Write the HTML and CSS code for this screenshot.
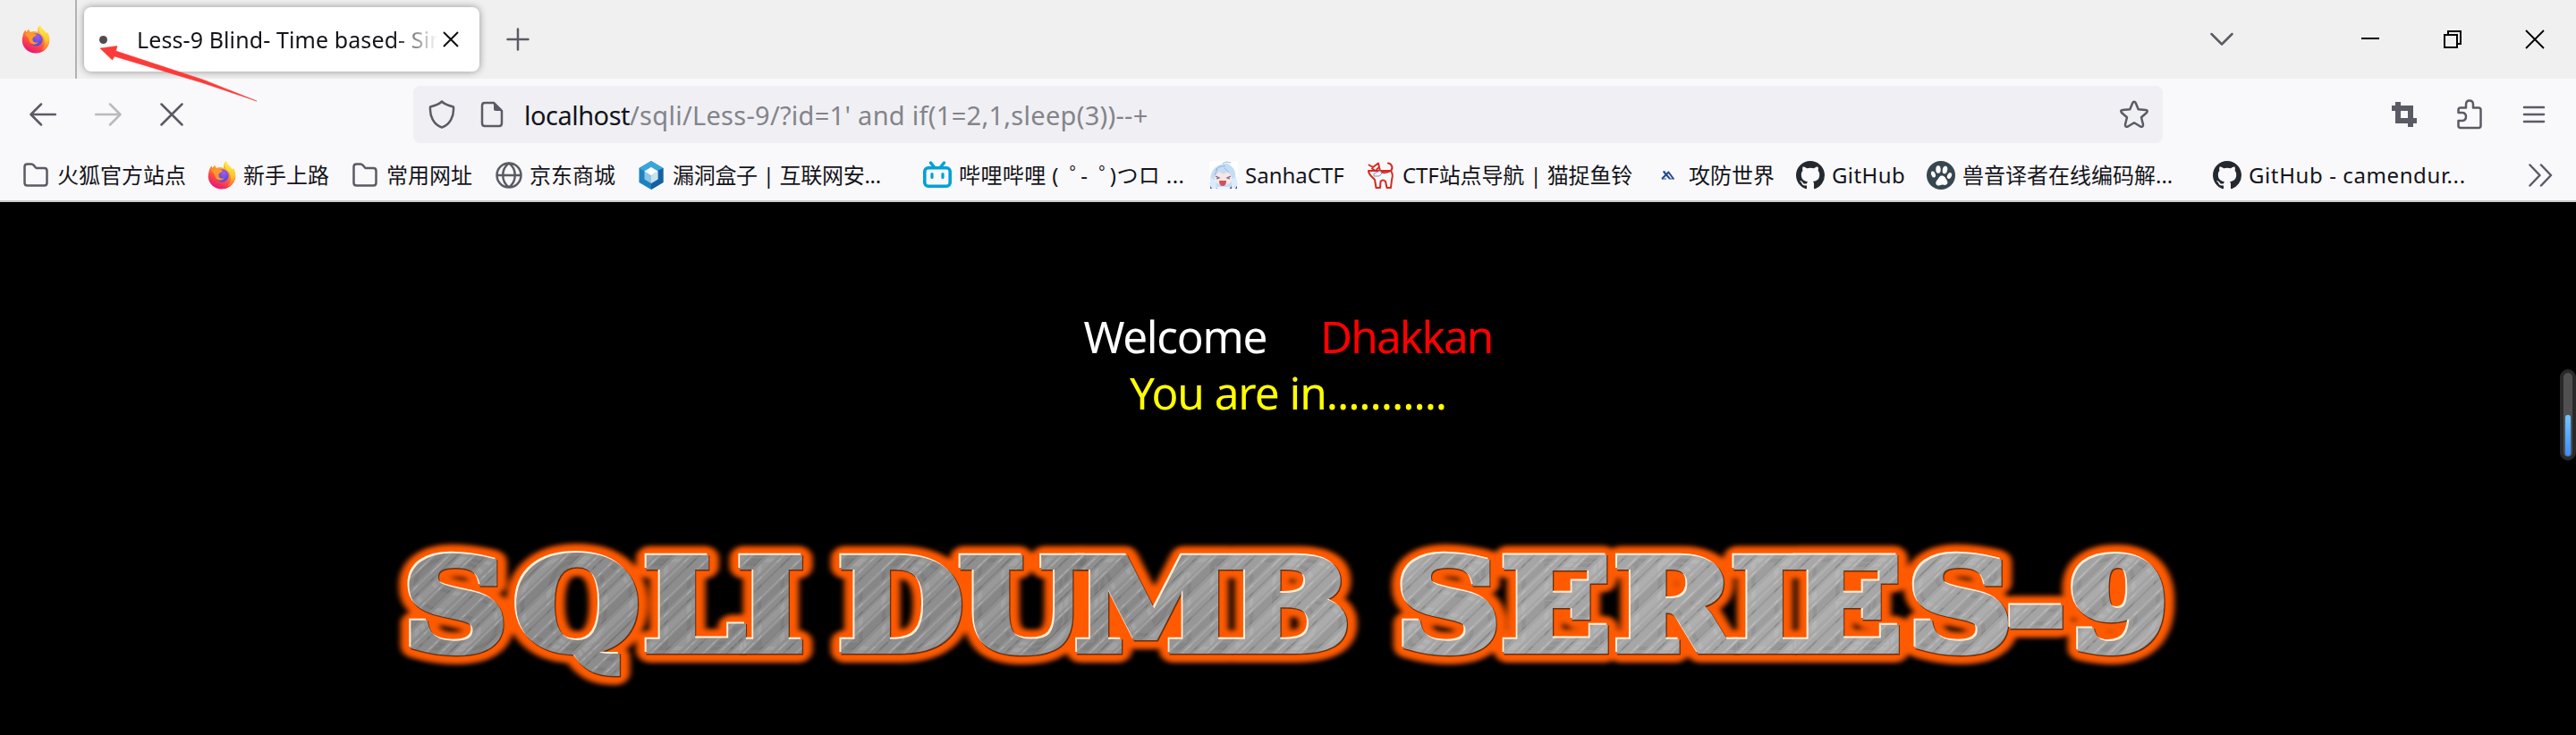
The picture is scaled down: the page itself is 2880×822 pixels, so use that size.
FILE: index.html
```html
<!DOCTYPE html>
<html lang="zh-CN">
<head>
<meta charset="utf-8">
<title>Less-9 Blind- Time based- Single Quotes</title>
<link rel="stylesheet" href="styles.css">
</head>
<body>
<svg class="defs" width="0" height="0" aria-hidden="true">
  <defs>
    <linearGradient id="fox" x1=".8" y1="0" x2=".3" y2="1"><stop offset="0" stop-color="#fff44f"/><stop offset=".35" stop-color="#ffa72c"/><stop offset=".65" stop-color="#ff4f3f"/><stop offset="1" stop-color="#e6107c"/></linearGradient>
    <linearGradient id="foxtail" x1="0" y1="0" x2="0" y2="1"><stop offset="0" stop-color="#fff04e"/><stop offset=".6" stop-color="#ffc52f"/><stop offset="1" stop-color="#ff6b37"/></linearGradient>
    <radialGradient id="globe" cx=".6" cy=".3"><stop offset="0" stop-color="#a45ae8"/><stop offset="1" stop-color="#5f4bd8"/></radialGradient>
    <symbol id="firefox" viewBox="0 0 32 32">
      <path fill="url(#fox)" d="M1.500 12C2 9 3 7 4.500 5.500L5.500 8 8 4.500 10 8C13 6.500 16 7 18 8C17.500 4 19 1.500 21 0C21.500 4 26 6 28 10L29 8C31 12 31.800 16 31 20C29 27 23 31.500 16 31.500C8 31.500 1.500 26 .8 18C.7 16 1 14 1.500 12Z"/>
      <path fill="url(#foxtail)" d="M21 0C21.500 4 26 6 28 10L29 8C31.500 13 31.500 18 30 22C28 27 25 28 22 28C27 24 27 17 24 12C21 10 18 6 21 0Z"/>
      <circle cx="16.500" cy="16.500" r="7.200" fill="url(#globe)"/>
      <path fill="#ff9a2c" d="M4 10C7 8 10 8 12 9.500L17 10.500C17 12 14 13 13 14C11 18 15 21 19 19C15 24 8 21 8 15C7 13 5 12 4 10Z"/>
    </symbol>
    <symbol id="folder" viewBox="0 0 32 32"><path class="line" d="M3.500 24.500V6.500Q3.500 3.500 6.500 3.500H11Q12.500 3.500 13.500 4.600L16.500 8H25.500Q28.500 8 28.500 11V24.500Q28.500 27.500 25.500 27.500H6.500Q3.500 27.500 3.500 24.500Z"/></symbol>
    <symbol id="github" viewBox="0 0 16 16"><path fill="#24292f" d="M8 0C3.580 0 0 3.580 0 8c0 3.540 2.290 6.530 5.470 7.590.4.070.55-.17.55-.38 0-.19-.01-.82-.01-1.490-2.010.37-2.530-.49-2.690-.94-.09-.23-.48-.94-.82-1.130-.28-.15-.68-.52-.01-.53.63-.01 1.080.58 1.230.82.72 1.210 1.870.87 2.330.66.070-.52.28-.87.51-1.070-1.780-.2-3.640-.89-3.640-3.950 0-.87.31-1.590.82-2.150-.08-.2-.36-1.020.08-2.120 0 0 .67-.21 2.200.82.64-.18 1.320-.27 2-.27s1.360.09 2 .27c1.530-1.040 2.200-.82 2.200-.82.44 1.100.16 1.920.08 2.120.51.56.82 1.270.82 2.150 0 3.070-1.870 3.750-3.650 3.950.29.25.54.73.54 1.480 0 1.070-.01 1.930-.01 2.200 0 .21.15.46.55.38A8.010 8.010 0 0 0 16 8c0-4.420-3.580-8-8-8Z"/></symbol>
  </defs>
</svg>

<header class="chrome">
  <div class="tabstrip">
    <div class="pinned"><svg width="32" height="32"><use href="#firefox"/></svg></div>
    <div class="tab">
      <i class="dot"></i>
      <span class="tab-title">Less-9 Blind- Time based- Sin</span>
      <svg class="tab-close" width="18" height="18" viewBox="0 0 18 18"><path d="M1 1L17 17M17 1L1 17" fill="none" stroke="#111" stroke-width="2"/></svg>
    </div>
    <svg class="plus" width="26" height="26" viewBox="0 0 26 26"><path class="line" d="M13 1.500V24.500M1.500 13H24.500"/></svg>
    <div class="window-tools">
      <svg width="26" height="16" viewBox="0 0 26 16"><path class="line" d="M1.500 2L13 13.500 24.500 2"/></svg>
      <svg width="20" height="22" viewBox="0 0 20 22"><path d="M0 10H20" stroke="#000" stroke-width="2"/></svg>
      <svg width="20" height="20" viewBox="0 0 20 20"><path d="M1 5H15V19H1ZM5 5V1H19V15H15" fill="none" stroke="#000" stroke-width="2"/></svg>
      <svg width="22" height="22" viewBox="0 0 22 22"><path d="M1 1L21 21M21 1L1 21" stroke="#000" stroke-width="1.800"/></svg>
    </div>
  </div>

  <div class="navbar">
    <div class="nav-buttons">
      <svg width="30" height="26" viewBox="0 0 30 26"><path class="line" d="M29 13H2M13 1.500L1.500 13 13 24.500"/></svg>
      <svg class="faded" width="30" height="26" viewBox="0 0 30 26"><path class="line" d="M1 13H28M17 1.500L28.500 13 17 24.500"/></svg>
      <svg width="26" height="26" viewBox="0 0 26 26"><path class="line" d="M1.500 1.500L24.500 24.500M24.500 1.500L1.500 24.500"/></svg>
    </div>
    <div class="urlbar">
      <svg width="30" height="32" viewBox="0 0 30 32"><path class="line" d="M15 1.500C18 4.500 23 6.300 28 7.500C28.800 18 24 27.500 15 30.500C6 27.500 1.200 18 2 7.500C7 6.300 12 4.500 15 1.500Z"/></svg>
      <svg class="page-icon" width="26" height="30" viewBox="0 0 26 30"><path class="line" d="M5 2H15L24 11V25Q24 28 21 28H5Q2 28 2 25V5Q2 2 5 2Z"/><path fill="#5b5b66" d="M15 1L25 11H17Q15 11 15 9Z"/></svg>
      <span class="url"><b>localhost</b>/sqli/Less-9/?id=1' and if(1=2,1,sleep(3))--+</span>
      <svg class="star" width="34" height="32" viewBox="0 0 34 32"><path class="line" d="M15.200 3.200Q17 .4 18.800 3.200L21.700 10.300 29.800 11Q33 11.500 31 14L25 19.300 27 27.300Q27.300 30.800 24 29.500L17 25.200 10 29.500Q6.700 30.800 7 27.300L9 19.300 3 14Q1 11.500 4.200 11L12.300 10.300Z"/></svg>
    </div>
    <div class="nav-tools">
      <svg width="30" height="30" viewBox="0 0 30 30"><path fill="#5b5b66" d="M5 1H11V5H25V19H29V25H25V29H19V25H5V11H1V5H5ZM11 11V19H19V11Z" fill-rule="evenodd"/></svg>
      <svg width="28" height="34" viewBox="0 0 28 34"><path class="line" d="M1.500 14V12Q1.500 9.500 4 9.500H10V6Q10 1.500 14 1.500T18 6V9.500H24Q26.500 9.500 26.500 12V29.500Q26.500 32 24 32H4Q1.500 32 1.500 29.500V24H6Q10 23.500 10 19.500T6 15H1.500Z"/></svg>
      <svg width="26" height="22" viewBox="0 0 26 22"><path class="line" d="M2 3H24M2 11H24M2 19H24"/></svg>
    </div>
  </div>

  <nav class="bookmarks">
    <div class="bm"><svg width="32" height="32"><use href="#folder"/></svg><span>火狐官方站点</span></div>
    <div class="bm"><svg width="32" height="32"><use href="#firefox"/></svg><span>新手上路</span></div>
    <div class="bm"><svg width="32" height="32"><use href="#folder"/></svg><span>常用网址</span></div>
    <div class="bm"><svg width="32" height="32" viewBox="0 0 32 32"><path class="line" d="M17 2.500A13.500 13.500 0 1 0 17 29.500A13.500 13.500 0 1 0 17 2.500ZM3.500 16H30.500M17 2.500C8 9 8 23 17 29.500C26 23 26 9 17 2.500"/></svg><span>京东商城</span></div>
    <div class="bm"><svg width="32" height="32" viewBox="0 0 32 32"><path fill="#1f82c0" d="M16 0L29.500 8V24L16 32 2.500 24V8Z"/><path fill="#3aa5db" d="M16 0L29.500 8 16 16 2.500 8Z"/><path fill="#1560a3" d="M29.500 8V24L16 32V25L23 20V11Z"/><path fill="#8cc7e6" d="M16 7L23.500 11.500V20.500L16 25 8.500 20.500V11.500Z"/><path fill="#fff" d="M16 7L23.500 11.500 16 16 8.500 11.500Z"/><path fill="#c5e2f1" d="M16 16L23.500 11.500V20.500L16 25Z"/></svg><span class="loud">漏洞盒子 | 互联网安...</span></div>
    <div class="bm"><svg width="32" height="32" viewBox="0 0 32 32"><path d="M8.500 2L12.500 7M23.500 2L19.500 7" stroke="#00a1d6" stroke-width="3.500" stroke-linecap="round"/><rect x="1.800" y="7.800" width="28.400" height="20.400" rx="4" fill="#f9f9fb" stroke="#00a1d6" stroke-width="3.600"/><path d="M10 14.500V18.500M22 14.500V18.500" stroke="#00a1d6" stroke-width="3.200" stroke-linecap="round"/></svg><span class="bili">哔哩哔哩 (<i>゜</i>-<i>゜</i>)つロ ...</span></div>
    <div class="bm"><svg width="32" height="32" viewBox="0 0 32 32"><path fill="#fff" d="M0 0H32V32H0Z"/><path d="M1 31L2 23 8 18 25 18 31 22 31 31Z" fill="#4b4385"/><path fill="#c5dcf5" d="M13 4C20 1 24 4 23 5C29 8 30 15 29 22L26 25 24 30H7L2 26C0 17 2 8 13 4Z"/><path fill="#dcebfb" d="M2 19L7 22 8 31H3L0 26ZM25 20L30 18 32 26 29 31H25Z"/><path fill="#fbe7e2" d="M6 17L11 12 16 15 21 12 25 17V23Q16 31 6 23Z"/><path d="M7 17L11 19 8 20M24 17L20 19 23 20" fill="none" stroke="#6f678f" stroke-width="1.300"/><path d="M11 22H19Q19 28 15 28T11 22Z" fill="#c95263"/><path fill="#eef3fd" d="M9 29H22L24 32H8Z"/><path d="M15 3Q18 0 24 2M7 10Q11 5 18 6M6 16L9 9M17 8L22 13" fill="none" stroke="#8fb5df"/></svg><span>SanhaCTF</span></div>
    <div class="bm"><svg width="32" height="32" viewBox="0 0 32 32"><path d="M2.500 4.500L7 7 13 2.500 15 11.500C18 14 23 13.500 27 11C30 8 28 3 24 2.500M27 11C30 15 29 18 28 21L27 30H22.500L21 23Q18 20 15.500 23L15 30H10.500L9 21C6 17 2 16 2 11ZM6 8.500L9 10.500M10.500 10.500L12.500 8" fill="none" stroke="#d42a20" stroke-width="2" stroke-linecap="round" stroke-linejoin="round"/><path d="M8 14L15 11 17 14 14 17 8 17Z" fill="#eef1fb" stroke="#8792b5"/></svg><span class="cat">CTF站点导航 | 猫捉鱼铃</span></div>
    <div class="bm"><svg width="32" height="32" viewBox="0 0 32 32"><path d="M12 12L19 20M18 12L10 20M17 12L23 20" stroke="#254a8b" stroke-width="2"/><path d="M10 20H15M11 12H14M19 20H24" stroke="#254a8b"/></svg><span>攻防世界</span></div>
    <div class="bm"><svg width="32" height="32"><use href="#github"/></svg><span class="gh">GitHub</span></div>
    <div class="bm"><svg width="32" height="32" viewBox="0 0 32 32"><circle cx="16" cy="16" r="16" fill="#37474f"/><g fill="#fff"><ellipse cx="13" cy="9.500" rx="2.700" ry="4.300"/><ellipse cx="20.500" cy="10" rx="2.700" ry="4.300" transform="rotate(12 20.500 10)"/><ellipse cx="7.500" cy="15" rx="2.300" ry="3.600" transform="rotate(-20 7.500 15)"/><ellipse cx="25.500" cy="16.500" rx="2.300" ry="3.600" transform="rotate(25 25.500 16.500)"/><path d="M17 16.500C20 16.500 21 19 22.500 21.500C25 25 22 28 18 26.500C15 26.500 14 28.500 11.500 27C9 25 11 22 12.500 20.500C14 18.500 14.500 16.500 17 16.500Z"/></g></svg><span>兽音译者在线编码解...</span></div>
    <div class="bm"><svg width="32" height="32"><use href="#github"/></svg><span class="camen">GitHub - camendur...</span></div>
    <svg class="more" width="28" height="26" viewBox="0 0 28 26"><path class="line" d="M2.500 1.500L13.500 13 2.500 24.500M15 1.500L26 13 15 24.500"/></svg>
  </nav>
  <svg class="pointer" width="180" height="66" viewBox="0 0 180 66"><path fill="#fc3a38" stroke="#fc3a38" stroke-width=".6" d="M2 4L21 1.500 19.500 7 118 39.500 177 63 116 42.500 18 13 15.500 17Z"/></svg>
</header>

<main class="page">
  <p class="welcome"><span class="hello">Welcome</span><span class="name">Dhakkan</span></p>
  <p class="result">You are in...........</p>
  <svg class="banner" width="2060" height="200" viewBox="410 580 2060 200">
    <defs>
      <linearGradient id="steel" gradientUnits="userSpaceOnUse" x1="390" y1="0" x2="2150" y2="0"><stop offset="0" stop-color="#8b8b8b"/><stop offset=".4" stop-color="#909090"/><stop offset=".5" stop-color="#a3a3a3"/><stop offset=".75" stop-color="#a8a8a8"/><stop offset="1" stop-color="#a2a2a2"/></linearGradient>
      <pattern id="brush" width="67" height="300" patternUnits="userSpaceOnUse" patternTransform="rotate(42)">
        <path d="M3 0V300M21 0V300M44 0V300M59 0V300" stroke="#fff" stroke-opacity=".16" stroke-width="1.300"/>
        <path d="M9 0V300M30 0V300M50 0V300" stroke="#222" stroke-opacity=".14" stroke-width="1.500"/>
        <path d="M15 0V300M37 0V300" stroke="#fff" stroke-opacity=".09" stroke-width="6"/>
        <path d="M26 0V300M64 0V300" stroke="#000" stroke-opacity=".06" stroke-width="6"/>
      </pattern>
      <filter id="soft" x="-5%" y="-30%" width="110%" height="160%"><feGaussianBlur stdDeviation="2.800"/></filter>
      <text id="logo" class="logo-text" y="727" x="443.100 561 675 749.600 876 993.900 1122.600 1254 1408.300 1513 1627.800 1715.700 1795.700 1906 1979.600 2060">SQLIDUMBSERIES-9</text>
    </defs>
    <g transform="scale(1.150 1)">
      <use href="#logo" fill="#ff5a00" stroke="#ff5a00" stroke-width="28" stroke-linejoin="round" filter="url(#soft)"/>
      <use href="#logo" fill="#653015" stroke="#653015" stroke-width="9" x=".6" y=".6"/>
      <use href="#logo" fill="#fff0d8" stroke="#fff0d8" stroke-width="8" x="-1.700" y="-2"/>
      <use href="#logo" fill="url(#steel)" stroke="url(#steel)" stroke-width="8"/>
      <use href="#logo" fill="url(#brush)" stroke="url(#brush)" stroke-width="8"/>
    </g>
  </svg>
  <div class="meter"><i></i></div>
</main>
</body>
</html>
```
FILE: styles.css
```css
* { box-sizing: border-box; }
body { margin: 0; width: 2880px; height: 822px; overflow: hidden; background: #000; font-family: "Noto Sans", "Noto Sans CJK SC", sans-serif; }
svg { display: block; flex: none; }
.defs { position: absolute; }
.line { fill: none; stroke: #5b5b66; stroke-width: 2.5; stroke-linecap: round; stroke-linejoin: round; }
.chrome { position: relative; height: 226px; background: #f9f9fb; border-bottom: 2px solid #ccc; }
.tabstrip { display: flex; align-items: center; height: 88px; background: #f0f0f0; }
.pinned { display: flex; align-items: center; width: 86px; height: 88px; padding-left: 24px; border-right: 2px solid #b2b2b2; }
.tab { display: flex; align-items: center; width: 442px; height: 72px; margin-left: 8px; padding-left: 17px; border-radius: 8px; background: #fff; box-shadow: 0 0 8px rgba(0,0,0,.4); }
.dot { width: 9px; height: 9px; border-radius: 50%; background: #4d4d4d; }
.tab-title { width: 340px; margin-left: 33px; white-space: nowrap; font-size: 25px; letter-spacing: .1px; line-height: 40px; color: #15141a; -webkit-mask-image: linear-gradient(90deg, #000 84%, transparent 99%); mask-image: linear-gradient(90deg, #000 84%, transparent 99%); }
.tab-close { margin-left: 2px; }
.plus { margin-left: 30px; }
.window-tools { display: flex; align-items: center; margin-left: auto; padding-right: 35px; }
.window-tools svg:nth-child(2) { margin-left: 143px; }
.window-tools svg:nth-child(3) { margin-left: 72px; }
.window-tools svg:nth-child(4) { margin-left: 71px; }
.navbar { display: flex; align-items: center; height: 80px; }
.nav-buttons { display: flex; align-items: center; width: 462px; padding-left: 33px; }
.nav-buttons svg + svg { margin-left: 43px; }
.faded { opacity: .4; }
.urlbar { display: flex; align-items: center; width: 1956px; height: 64px; padding: 0 15px 0 17px; border-radius: 8px; background: #f0f0f4; }
.page-icon { margin-left: 28px; }
.url { margin-left: 23px; white-space: pre; font-size: 29px; letter-spacing: .28px; color: #84848a; }
.url b { font-weight: 400; letter-spacing: -.5px; color: #15141a; }
.star { margin-left: auto; }
.nav-tools { display: flex; align-items: center; margin-left: 255px; }
.nav-tools svg:nth-child(2) { margin-left: 44px; }
.nav-tools svg:nth-child(3) { margin-left: 45px; }
.bookmarks { display: grid; grid-template-columns: 208px 160px 160px 160px 320px 320px 176px 320px 160px 146px 320px 352px 28px; align-items: center; height: 56px; padding-left: 24px; }
.bm { display: flex; align-items: center; gap: 8px; white-space: nowrap; font-size: 24px; line-height: 36px; color: #15141a; }
.loud { letter-spacing: -.3px; }
.cat { letter-spacing: -.1px; }
.gh { letter-spacing: .4px; }
.camen { letter-spacing: .6px; }
.bili { letter-spacing: .4px; }
.bili i { margin: 0 -12px 0 12px; font-style: normal; }
.pointer { position: absolute; left: 110px; top: 50px; }
.page { position: relative; height: 596px; padding-top: 119px; text-align: center; }
.page p { margin: 0; font-size: 49.5px; line-height: 63px; white-space: nowrap; }
.welcome { display: flex; justify-content: center; gap: 60px; color: #fff; }
.hello { letter-spacing: -1.3px; }
.name { letter-spacing: -1.9px; color: #f00; }
.page .result { letter-spacing: -1.05px; color: #ff0; }
.banner { margin: 109px 0 0 410px; }
.logo-text { font: 700 140px "DejaVu Serif", serif; text-anchor: middle; }
.meter { position: absolute; right: 0; top: 187px; display: flex; width: 18px; height: 102px; padding: 47px 2px 1px; border: 4px solid #292929; border-radius: 9px; background: #505050; }
.meter i { width: 6px; height: 46px; border-radius: 3px; background: linear-gradient(#70c5ff, #3e8cff); }
```
